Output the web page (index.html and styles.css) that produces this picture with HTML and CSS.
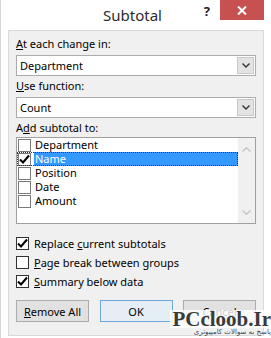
FILE: index.html
```html
<!DOCTYPE html>
<html lang="en">
<head>
    <meta charset="UTF-8">
    <meta name="viewport" content="width=device-width, initial-scale=1.0">
    <title>Subtotal</title>
    <link rel="stylesheet" href="styles.css">
</head>
<body>
    <div class="window">
        <div class="titlebar">
            <span></span>
            <span class="title">Subtotal</span>
            <div class="caption-buttons">
                <span class="help">?</span>
                <span class="close">
                    <svg width="10" height="9" viewBox="0 0 10 9"><path d="M1 0.5 L9 8.5 M9 0.5 L1 8.5" stroke="#fff" stroke-width="2"/></svg>
                </span>
            </div>
        </div>
        <div class="dialog">
            <div class="label"><u>A</u>t each change in:</div>
            <div class="combo">
                <span class="value">Department</span>
                <span class="drop">
                    <svg width="8" height="5" viewBox="0 0 8 5"><path d="M0.5 0.5 L4 4 L7.5 0.5" fill="none" stroke="#333" stroke-width="1.4"/></svg>
                </span>
            </div>
            <div class="label"><u>U</u>se function:</div>
            <div class="combo">
                <span class="value">Count</span>
                <span class="drop">
                    <svg width="8" height="5" viewBox="0 0 8 5"><path d="M0.5 0.5 L4 4 L7.5 0.5" fill="none" stroke="#333" stroke-width="1.4"/></svg>
                </span>
            </div>
            <div class="label">A<u>d</u>d subtotal to:</div>
            <div class="listbox">
                <ul class="items">
                    <li><span class="cb"></span><span class="text">Department</span></li>
                    <li class="selected">
                        <span class="cb">
                            <svg width="11" height="11" viewBox="0 0 11 11"><path d="M1 5.5 L4 8.5 L10 1.5" fill="none" stroke="#000" stroke-width="2"/></svg>
                        </span>
                        <span class="text">Name</span>
                    </li>
                    <li><span class="cb"></span><span class="text">Position</span></li>
                    <li><span class="cb"></span><span class="text">Date</span></li>
                    <li><span class="cb"></span><span class="text">Amount</span></li>
                </ul>
                <div class="scrollbar">
                    <svg width="9" height="5" viewBox="0 0 9 5"><path d="M0.5 4.5 L4.5 0.8 L8.5 4.5" fill="none" stroke="#c2c2c2" stroke-width="1.3"/></svg>
                    <svg width="9" height="5" viewBox="0 0 9 5"><path d="M0.5 0.5 L4.5 4.2 L8.5 0.5" fill="none" stroke="#c2c2c2" stroke-width="1.3"/></svg>
                </div>
            </div>
            <div class="options">
                <div class="option">
                    <span class="cb">
                        <svg width="11" height="11" viewBox="0 0 11 11"><path d="M1 5.5 L4 8.5 L10 1.5" fill="none" stroke="#000" stroke-width="2"/></svg>
                    </span>
                    <span>Replace <u>c</u>urrent subtotals</span>
                </div>
                <div class="option">
                    <span class="cb"></span>
                    <span><u>P</u>age break between groups</span>
                </div>
                <div class="option">
                    <span class="cb">
                        <svg width="11" height="11" viewBox="0 0 11 11"><path d="M1 5.5 L4 8.5 L10 1.5" fill="none" stroke="#000" stroke-width="2"/></svg>
                    </span>
                    <span><u>S</u>ummary below data</span>
                </div>
            </div>
            <div class="buttons">
                <button class="btn"><u>R</u>emove All</button>
                <button class="btn default">OK</button>
                <button class="btn">Cancel</button>
            </div>
        </div>
        <div class="watermark">
            <span class="brand">PCcloob.Ir</span>
            <span class="tagline">پاسخ به سوالات کامپیوتری</span>
        </div>
    </div>
</body>
</html>
```

FILE: styles.css
```css
body {
    margin: 0;
    background-color: #ffffff;
    font-family: "Noto Sans", Arial, sans-serif;
    font-size: 11px;
    color: #000000;
}
.window {
    position: relative;
    width: 271px;
    height: 338px;
    box-sizing: border-box;
    padding: 0 7px;
    border-left: 1px solid #d6d6d6;
    overflow: hidden;
}
.titlebar {
    display: grid;
    grid-template-columns: 1fr auto 1fr;
    height: 30px;
    margin: 0 -7px;
    padding-right: 7px;
}
.title {
    font-size: 15px;
    line-height: 30px;
    color: #2b2b2b;
}
.caption-buttons {
    display: flex;
    justify-content: flex-end;
    align-items: flex-start;
}
.help {
    font-weight: bold;
    font-size: 13px;
    line-height: 22px;
    margin-right: 10px;
    color: #222222;
}
.close {
    width: 44px;
    height: 20px;
    background-color: #c75050;
    display: flex;
    justify-content: center;
    align-items: center;
}
.dialog {
    background-color: #f0f0f0;
    border: 1px solid #d9d9d9;
    height: 299px;
    padding: 5px 7px 0 7px;
}
.label {
    line-height: 16px;
    height: 16px;
}
.combo {
    display: flex;
    align-items: center;
    height: 19px;
    margin: 3px 0 2px 0;
    background-color: #ffffff;
    border: 1px solid #acacac;
    line-height: 14px;
}
.combo .value {
    flex: 1;
    padding-left: 3px;
}
.drop {
    width: 15px;
    height: 15px;
    margin-right: 1px;
    background-color: #e3e3e3;
    border: 1px solid #c8c8c8;
    display: flex;
    justify-content: center;
    align-items: center;
}
.listbox {
    display: flex;
    height: 85px;
    margin-top: 1px;
    background-color: #ffffff;
    border: 1px solid #a0a0a0;
}
.items {
    list-style: none;
    margin: 0;
    padding: 0;
    flex: 1;
}
.items li {
    display: flex;
    align-items: center;
    height: 14px;
    line-height: 14px;
    padding-left: 1px;
}
.cb {
    width: 11px;
    height: 11px;
    border: 1px solid #333333;
    background-color: #ffffff;
    display: flex;
    justify-content: center;
    align-items: center;
    flex-shrink: 0;
}
.items .cb {
    border-color: #7a7a7a;
}
.items .text {
    margin-left: 3px;
    height: 14px;
    padding-left: 1px;
    flex: 1;
}
.items .selected {
    outline: 1px dotted #333333;
    outline-offset: -1px;
}
.items .selected .text {
    background-color: #3399ff;
    color: #ffffff;
}
.scrollbar {
    width: 17px;
    background-color: #f0f0f0;
    display: flex;
    flex-direction: column;
    justify-content: space-between;
    align-items: center;
    padding: 9px 0 8px 0;
}
.options {
    margin-top: 13px;
    display: flex;
    flex-direction: column;
    gap: 6px;
}
.option {
    display: flex;
    align-items: center;
    gap: 5px;
    height: 13px;
    line-height: 13px;
}
.buttons {
    display: flex;
    justify-content: space-between;
    margin-top: 12px;
}
.btn {
    width: 73px;
    height: 22px;
    font-family: "Noto Sans", Arial, sans-serif;
    font-size: 11px;
    background-color: #e1e1e1;
    border: 1px solid #adadad;
    padding: 0;
    color: #000000;
}
.btn.default {
    border-color: #6fa8dc;
    background-color: #e5edf5;
}
.watermark {
    position: absolute;
    right: 0;
    top: 310px;
    display: flex;
    flex-direction: column;
    align-items: flex-end;
}
.brand {
    font-family: "Liberation Serif", serif;
    font-weight: bold;
    font-size: 21px;
    line-height: 18px;
    color: #3a3a3a;
    background-color: rgba(255, 255, 255, 0.8);
    padding-left: 2px;
}
.tagline {
    font-family: "DejaVu Sans", sans-serif;
    font-size: 7px;
    line-height: 9px;
    color: #444444;
}
```
